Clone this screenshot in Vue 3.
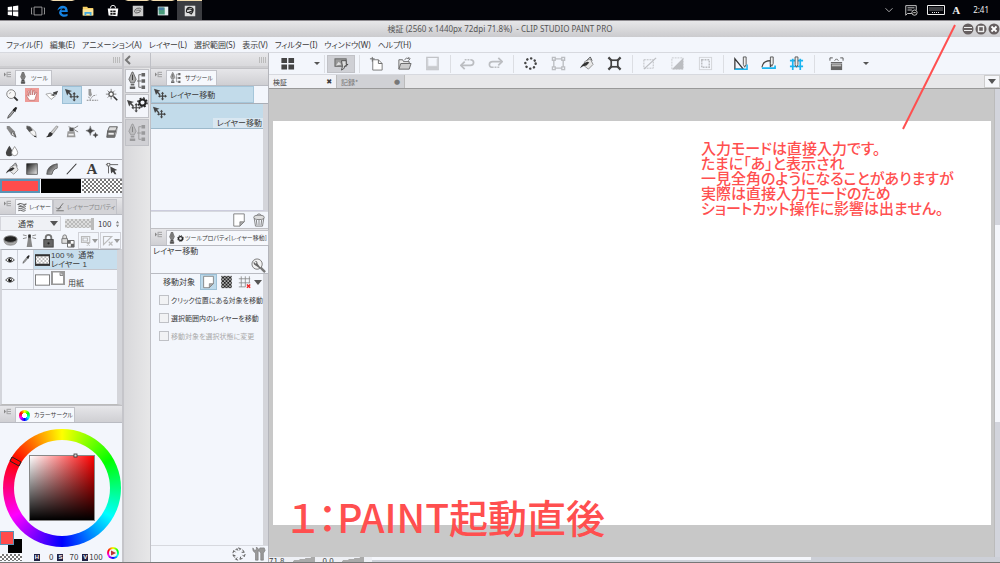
<script setup>
import { ref } from 'vue'

const menus = ['ファイル(F)', '編集(E)', 'アニメーション(A)', 'レイヤー(L)', '選択範囲(S)', '表示(V)', 'フィルター(I)', 'ウィンドウ(W)', 'ヘルプ(H)']
const toolGroups = [
  [['lens', '虫めがね'], ['hand', '移動', 'hand'], ['rotate', '操作'], ['move', 'レイヤー移動', 'on'], ['lasso', '選択範囲'], ['wand', '自動選択'], ['dropper', 'スポイト']],
  [['pen', 'ペン'], ['pencil', '鉛筆'], ['brush', '筆'], ['airbrush', 'エアブラシ'], ['sparkle', 'デコレーション'], ['eraser', '消しゴム'], ['drops', '色混ぜ']],
  [['bucket', '塗りつぶし'], ['gradient', 'グラデーション'], ['fan', '図形'], ['line', '直線'], ['letter', 'テキスト'], ['edit', '線修正']]
]
const commands = [
  [['photo', 'CLIP STUDIO', 'pressed']],
  [['newfile', '新規'], ['open', '開く'], ['save', '保存', 'dim']],
  [['undo', '取り消し', 'dim'], ['redo', 'やり直し', 'dim']],
  [['spin', '消去'], ['frame', '選択範囲外を消去', 'dim'], ['bucket', '塗りつぶし'], ['scale', '拡大・縮小']],
  [['deselect', '選択を解除', 'dim'], ['invert', '選択範囲を反転', 'dim'], ['border', '境界線', 'dim']],
  [['snap1', '定規にスナップ'], ['snap2', '特殊定規にスナップ'], ['snap3', 'グリッドにスナップ']],
  [['keyboard', 'キーボード']]
]
const options = ref([
  { label: 'クリック位置にある対象を移動', on: false, off: false },
  { label: '選択範囲内のレイヤーを移動', on: false, off: false },
  { label: '移動対象を選択状態に変更', on: false, off: true }
])
const opacity = ref(100)
const blend = ref('通常')
</script>

<template>
  <div class="app">
    <svg class="defs" aria-hidden="true">
      <defs>
        <linearGradient id="g-dark" x1="0" y1="0" x2="1" y2="1"><stop offset="0" stop-color="#111" /><stop offset="1" stop-color="#eee" /></linearGradient>
        <pattern id="p-check" width="4" height="4" patternUnits="userSpaceOnUse"><rect width="4" height="4" fill="#fff" /><path d="M0 0h2v2H0zM2 2h2v2H2z" fill="#bbb" /></pattern>
        <pattern id="p-dark" width="4" height="4" patternUnits="userSpaceOnUse"><rect width="4" height="4" fill="#aaa" /><path d="M0 0h2v2H0zM2 2h2v2H2z" fill="#222" /></pattern>
      </defs>
      <symbol id="lens" viewBox="0 0 16 16"><circle cx="7" cy="7" r="5" fill="#f8f8f8" stroke="#777" /><path d="M5 7a2 2 0 0 1 2-2" fill="none" stroke="#aaa" /><path d="M10.500 10.500l4 4" stroke="#333" stroke-width="2.200" /></symbol>
      <symbol id="hand" viewBox="0 0 16 16"><path d="M5 14L1.800 9q0-1.500 1.500-1L4.500 9.500 3.500 4q.5-1.500 1.500 0l1 4 .2-6q1-1.200 1.700 0L8.200 8l1.500-5q1.300-.8 1.500.5L10.500 8l2-3q1.300-.3 1 1l-1.800 6-.7 2z" fill="#fff" stroke="#b66565" stroke-width=".8" /></symbol>
      <symbol id="rotate" viewBox="0 0 16 16"><path d="M1 7l5-1 6 3-5 4z" fill="#fff" stroke="#888" stroke-width=".8" /><path d="M6 8l4-1-1-2 6-2-2 5-2-1-1 2z" fill="#444" /></symbol>
      <symbol id="move" viewBox="0 0 16 16"><path d="M0 1l8 2.500-3 1L8 8 6.500 9 4 6 2.500 8.500z" fill="#444" /><path d="M10.500 4.500l2 2.500h-1.300v2.300h2.300V8l2.500 2-2.500 2v-1.300h-2.300V13h1.300l-2 2.500-2-2.500h1.300v-2.300H7.500V12L5 10l2.500-2v1.300h2.300V7H8.500z" fill="#444" /></symbol>
      <symbol id="lasso" viewBox="0 0 16 16"><path d="M4 1h3v3l1 4-2 2-2-2z" fill="#999" /><path d="M2 14h13M4 10l2 3 3-4 4-1" fill="none" stroke="#777" stroke-dasharray="2 1" /></symbol>
      <symbol id="wand" viewBox="0 0 16 16"><path d="M7 1v12M1 7h12M3 3l8 8M11 3l-8 8" stroke="#777" /><circle cx="7" cy="7" r="2.500" fill="#fff" stroke="#555" stroke-width="1.400" /><path d="M10 10l4 4" stroke="#333" stroke-width="1.800" /></symbol>
      <symbol id="dropper" viewBox="0 0 16 16"><path d="M3 14l1-3 5-6 1.500 1.500-5 6z" fill="#aaa" stroke="#333" stroke-width=".8" /><path d="M9 4l3-3 2 1-2 4 0 1-3-2z" fill="#222" /></symbol>
      <symbol id="pen" viewBox="0 0 16 16"><path d="M2 1l3 0 6 6 2 7-6-3L2 4z" fill="#888" /><path d="M8 8l2 0 2.500 6L7 11z" fill="#eee" stroke="#444" stroke-width=".7" /><path d="M9 9l3 4" stroke="#444" /></symbol>
      <symbol id="pencil" viewBox="0 0 16 16"><path d="M2 1l4 1 6 6 1 6-5-3L2 4z" fill="#f4f4f4" stroke="#888" stroke-width=".8" /><path d="M2 1l4 1 3 4-4 2-3-4z" fill="#555" /><path d="M11.500 12l1.500 2-3-1z" fill="#111" /></symbol>
      <symbol id="brush" viewBox="0 0 16 16"><path d="M13 1l2 1-6 8-3-1z" fill="#ccc" stroke="#777" stroke-width=".7" /><path d="M6 8l3 2q-1 4-8 4 3-2 3-4 1-2 2-2z" fill="#333" /></symbol>
      <symbol id="airbrush" viewBox="0 0 16 16"><path d="M3 7h8l1 7H2z" fill="#999" /><path d="M4 10h6v2H4z" fill="#eee" /><path d="M5 3h5v4H5z" fill="#555" /><path d="M10 4l5-3M10 5l5 3M7 3l-3-1" stroke="#777" /></symbol>
      <symbol id="sparkle" viewBox="0 0 16 16"><path d="M6 1q.3 5 5 5.500Q6.300 7 6 12 5.700 7 1 6.500 5.700 6 6 1zM12 8.500q.2 2.500 3 3-2.800.5-3 3-.2-2.500-3-3 2.800-.5 3-3z" fill="#444" stroke="#444" stroke-width=".4" /></symbol>
      <symbol id="eraser" viewBox="0 0 16 16"><path d="M5 2h9l-2 5H3z" fill="#ddd" stroke="#555" /><path d="M3 7h9l-1 7H2z" fill="#777" stroke="#555" /><path d="M3.500 8.500h7v3h-7zM14 2l-1 7-2 5" fill="#eee" stroke="#666" stroke-width=".7" /></symbol>
      <symbol id="drops" viewBox="0 0 16 16"><path d="M5 3q4 6 4 8a4 4 0 0 1-8 0q0-2 4-8z" fill="#444" /><path d="M11 4q3.500 5 3.500 7a3.500 3.500 0 0 1-7 0q0-2 3.500-7z" fill="#fff" stroke="#777" stroke-width=".8" /></symbol>
      <symbol id="bucket" viewBox="0 0 16 16"><path d="M6 6l6-3 3 6-5 5-5-4z" fill="#e8e8e8" stroke="#777" stroke-width=".8" /><path d="M1 13q2-5 8-7l2 1-3 3q-4 0-7 3z" fill="#333" /><path d="M8 5l4-4 2 4" fill="none" stroke="#555" /></symbol>
      <symbol id="gradient" viewBox="0 0 16 16"><rect x="2" y="2" width="12" height="12" fill="url(#g-dark)" stroke="#333" stroke-width=".8" /></symbol>
      <symbol id="fan" viewBox="0 0 16 16"><path d="M2 14Q2 4 14 2v5q-5 1-6 7z" fill="url(#g-dark)" stroke="#444" stroke-width=".8" /></symbol>
      <symbol id="line" viewBox="0 0 16 16"><path d="M2 14L13 2" stroke="#333" stroke-width="1.200" /></symbol>
      <symbol id="edit" viewBox="0 0 16 16"><path d="M1 3h14M4 3v10" stroke="#555" fill="none" /><rect x="2.500" y="1.500" width="3" height="3" fill="#fff" stroke="#555" stroke-width=".8" /><path d="M6 5l8 4-3 1 2 4h-2l-2-3-2 2z" fill="#444" /></symbol>
      <symbol id="nib" viewBox="0 0 10 20"><path d="M4 0h2l3 8-2 4H3L1 8z" fill="#888" stroke="#444" stroke-width=".8" /><path d="M5 3v6M3 13h4v2H3zM2 16h6v3H2z" stroke="#444" fill="#555" stroke-width=".8" /></symbol>
      <symbol id="nibtree" viewBox="0 0 20 20"><path d="M4.500 0h1L9 8l-2 4H3L1 8z" fill="#aaa" stroke="#555" stroke-width=".8" /><path d="M5 3v6" stroke="#333" /><path d="M3 13h4v2H3zM2 16h6v3H2zM15 1h4v4h-4zM15 8h4v4h-4zM15 15h4v4h-4z" fill="#666" /><path d="M15 3h-3v14h3M10 10h5" fill="none" stroke="#666" /></symbol>
      <symbol id="gear" viewBox="0 0 16 16"><circle cx="8" cy="8" r="4.500" fill="none" stroke="#222" stroke-width="3" /><circle cx="8" cy="8" r="6.700" fill="none" stroke="#222" stroke-width="2" stroke-dasharray="2.700 2.560" /></symbol>
      <symbol id="menuico" viewBox="0 0 8 8"><path d="M0 2l2 2-2 2zM4 1.500h4M4 4h4M4 6.500h4M3.500 1v6" stroke="#888" fill="#888" stroke-width=".8" /></symbol>
      <symbol id="layers" viewBox="0 0 16 16"><path d="M1 4q4-3 7-1t7 0L12 6q-4 2-6 0T1 4zM2 8q3-2 6 0t6-1M2 11q3-2 6 0t6-1M2 14q3-2 6 0t6-1" fill="none" stroke="#555" stroke-width="1.400" /></symbol>
      <symbol id="check" viewBox="0 0 16 16"><path d="M2 9l3 3 8-10M2 14h12M5 10l2 1 3-3" fill="none" stroke="#777" stroke-width="1.600" /></symbol>
      <symbol id="page" viewBox="0 0 16 16"><path d="M2 1h12v9l-5 5H2z" fill="#fff" stroke="#777" /><path d="M14 10H9v5z" fill="#aaa" stroke="#777" stroke-width=".8" /></symbol>
      <symbol id="trash" viewBox="0 0 16 16"><ellipse cx="8" cy="5" rx="6" ry="2.500" fill="#ddd" stroke="#777" /><path d="M5 3q3-4 6 0M2.500 6l1.500 9h8l1.500-9M5 8l.7 6M8 8v6M11 8l-.7 6" fill="none" stroke="#777" /></symbol>
      <symbol id="wrenchlens" viewBox="0 0 16 16"><circle cx="6.500" cy="6.500" r="5.500" fill="#f2f2f2" stroke="#777" /><path d="M10 10l5 5" stroke="#777" stroke-width="2.500" /><path d="M4 3l2 2-1 1-2-2q-1 3 2 4l4 3 1-1-3-4q0-3-3-3z" fill="#666" /></symbol>
      <symbol id="gridx" viewBox="0 0 16 16"><path d="M4 1v13M9 1v13M14 1v8M1 4h14M1 9h14M1 14h8" stroke="#888" fill="none" /><path d="M11 11l4 4M15 11l-4 4" stroke="#e22" stroke-width="1.800" /></symbol>
      <symbol id="spin" viewBox="0 0 16 16"><circle cx="8" cy="8" r="5.500" fill="none" stroke="#444" stroke-width="2.600" stroke-linecap="round" stroke-dasharray=".2 4.120" /></symbol>
      <symbol id="busy" viewBox="0 0 16 16"><path d="M7 1l3 1-2 2M12 3l2 3-3 0M15 8l-1 3-2-2M12 13l-3 1 1-3M7 15l-3-1 2-2M3 12l-2-3 3 1M1 7l1-3 2 2M4 3l2-1v2" fill="none" stroke="#555" stroke-width="1.100" /></symbol>
      <symbol id="wrench" viewBox="0 0 16 16"><path d="M1 1l2 3 2-1V0q4 2 2 6v9H4V7Q0 5 1 1zM9 1h5l1 3-2 3v8h-3V7L8 4z" fill="#999" stroke="#777" stroke-width=".7" /></symbol>
      <symbol id="photo" viewBox="0 0 16 16"><rect x="1" y="3" width="12" height="8" fill="#999" stroke="#666" /><path d="M2 10l3-4 3 3" fill="#ddd" /><path d="M8 5h5v4h2l-4 2v2l-3 2 1-4z" fill="#ddd" stroke="#444" stroke-width=".9" /></symbol>
      <symbol id="newfile" viewBox="0 0 16 16"><path d="M4 4h6l4 4v7H4z" fill="#fff" stroke="#777" /><path d="M10 4v4h4M1 3h5M3.500 1v5" fill="none" stroke="#666" /></symbol>
      <symbol id="open" viewBox="0 0 16 16"><path d="M2 14V4h4l1 2h6v2" fill="#eee" stroke="#666" /><path d="M2 14l2-6h11l-2 6z" fill="#ccc" stroke="#666" /><path d="M8 4q2-3 5-1M12 1l2 2-2 2" fill="none" stroke="#666" /></symbol>
      <symbol id="save" viewBox="0 0 16 16"><path d="M2 1.500h12v13H2z" fill="none" stroke="#666" stroke-width="1.500" /><path d="M2 11h12v3H2zM3 3v8M13 3v8" fill="#777" stroke="#888" /></symbol>
      <symbol id="undo" viewBox="0 0 16 16"><path d="M5 4h6q3.500 0 3.500 3T11 10H2" fill="none" stroke="#555" stroke-width="1.800" stroke-dasharray="2 1 2 1 20" /><path d="M5 6l-4 4 4 4" fill="none" stroke="#555" stroke-width="1.800" /></symbol>
      <symbol id="redo" viewBox="0 0 16 16"><path d="M12 12H5Q1.500 12 1.500 9T5 6h9" fill="none" stroke="#555" stroke-width="1.800" stroke-dasharray="2 1 2 1 20" /><path d="M11 2l4 4-4 4" fill="none" stroke="#555" stroke-width="1.800" /></symbol>
      <symbol id="frame" viewBox="0 0 16 16"><path d="M1.500 1.500h3v3h-3zM11.500 1.500h3v3h-3zM1.500 11.500h3v3h-3zM11.500 11.500h3v3h-3zM5 3h6M5 13h6M3 5v6M13 5v6" fill="none" stroke="#555" stroke-width="1.400" /></symbol>
      <symbol id="scale" viewBox="0 0 16 16"><rect x="4.500" y="4.500" width="7" height="7" fill="none" stroke="#444" stroke-width="1.800" /><path d="M5 5L1.500 1.500M11 5l3.500-3.500M5 11l-3.500 3.500M11 11l3.500 3.500" fill="none" stroke="#444" stroke-width="2.400" /></symbol>
      <symbol id="deselect" viewBox="0 0 16 16"><rect x="2" y="4" width="10" height="9" fill="none" stroke="#555" stroke-dasharray="2 1" /><path d="M2 14L15 2" stroke="#555" stroke-width="1.300" /></symbol>
      <symbol id="invert" viewBox="0 0 16 16"><rect x="2" y="2" width="12" height="12" fill="none" stroke="#777" stroke-dasharray="2 1" /><path d="M14 2v12H2z" fill="#555" /></symbol>
      <symbol id="border" viewBox="0 0 16 16"><rect x="1.500" y="1.500" width="13" height="13" fill="none" stroke="#999" /><rect x="4" y="4" width="8" height="8" fill="none" stroke="#555" stroke-width="1.500" stroke-dasharray="2 1" /></symbol>
      <symbol id="snap1" viewBox="0 0 16 16"><path d="M2 3v11h9z" fill="none" stroke="#333" stroke-width="1.300" /><path d="M2 14h13V9" fill="none" stroke="#18b4f0" stroke-width="1.600" /><path d="M11 1h3v8l-1.500 3L11 9z" fill="#eee" stroke="#555" /></symbol>
      <symbol id="snap2" viewBox="0 0 16 16"><path d="M1 12Q2 5 10 5v7" fill="none" stroke="#444" stroke-width="1.300" /><path d="M1 13h14v-3" fill="none" stroke="#18b4f0" stroke-width="1.800" /><path d="M10 1h3v7l-1.500 3L10 8z" fill="#eee" stroke="#555" /></symbol>
      <symbol id="snap3" viewBox="0 0 16 16"><path d="M4 3v12M12 3v12M1 5h14M1 11h14" stroke="#18b4f0" stroke-width="1.800" /><path d="M6.500 1h3v8L8 12 6.500 9z" fill="#eee" stroke="#555" /></symbol>
      <symbol id="keyboard" viewBox="0 0 16 16"><path d="M2 8h12v7H2z" fill="#666" /><path d="M3 9h10v2H3z" fill="#bbb" /><path d="M1 5V2h3M12 2h3v3M6 5l2-2 2 2M2 7h12" fill="none" stroke="#555" /></symbol>
      <symbol id="eye" viewBox="0 0 16 12"><path d="M1 6q7-8 14 0-7 7-14 0z" fill="#eee" stroke="#333" stroke-width="1.300" /><circle cx="8" cy="6" r="3" fill="#111" /><circle cx="9" cy="5" r="1" fill="#fff" /></symbol>
      <symbol id="mask" viewBox="0 0 16 16"><path d="M1 7q0 6 7 6t7-6z" fill="#aaa" stroke="#777" stroke-width=".7" /><ellipse cx="8" cy="6.500" rx="7" ry="3.500" fill="#222" stroke="#888" /></symbol>
      <symbol id="beacon" viewBox="0 0 16 16"><path d="M6.500 5h3l1.500 10H5z" fill="#888" /><path d="M7 2h2v3H7z" fill="#222" stroke="#444" /><path d="M1 2l4 1M15 2l-4 1M1 6l4-1M15 6l-4-1" stroke="#888" /></symbol>
      <symbol id="lock" viewBox="0 0 16 16"><path d="M5 8V5q0-3 3-3t3 3v3" fill="none" stroke="#777" stroke-width="2" /><rect x="3" y="7" width="10" height="8" fill="#666" stroke="#444" /><circle cx="8" cy="11" r="1.200" fill="#222" /></symbol>
      <symbol id="locktr" viewBox="0 0 16 16"><path d="M3 6V4q0-2 2-2t2 2v2M2 6h6v5H2z" fill="#ddd" stroke="#777" /><path d="M8 8h7v7H8z" fill="#fff" stroke="#666" /><path d="M8 8h3.500v3.500H8zM11.500 11.500H15V15h-3.500z" fill="#666" /></symbol>
      <symbol id="maskx" viewBox="0 0 16 16"><path d="M2 2h11v8H2zM4 4h6v4H4zM9 10l4 4M13 10l-4 4" fill="none" stroke="#bbb" stroke-width="1.500" /></symbol>
      <symbol id="rulerx" viewBox="0 0 16 16"><path d="M2 2h11L2 13zM9 9l5 5M14 9l-5 5" fill="none" stroke="#bbb" stroke-width="1.500" /></symbol>
    </svg>

    <header class="taskbar">
      <button class="task" aria-label="スタート"><svg viewBox="0 0 16 16"><path d="M2 3.500l5-.7v4.700H2zM8 2.600l6-.8v5.700H8zM2 8.500h5v4.700l-5-.7zM8 8.500h6v5.700l-6-.8z" fill="#fff" /></svg></button>
      <button class="task" aria-label="タスクビュー"><svg viewBox="0 0 16 16"><path d="M3.500 3.500h9v9h-9zM1.500 4.500h-1v7h1M14.500 4.500h1v7h-1" fill="none" stroke="#aaa" /></svg></button>
      <button class="task run" aria-label="Edge"><svg viewBox="0 0 16 16"><path d="M1.500 7.500Q3 2 8 2q5.500 0 5.500 7H6.200q.3 3 4 3 2 0 3-.8v2.500Q11 15 8 14.500 3.500 13.500 3.500 9.500 4 6 7 5 3.500 5 1.500 7.500zM6.200 7h4.300Q10.500 4.800 8.500 4.800T6.200 7z" fill="#1683e2" /></svg></button>
      <button class="task" aria-label="エクスプローラー"><svg viewBox="0 0 16 16"><path d="M2 3h5l1 1.500h6V13H2z" fill="#f5cf65" /><path d="M2 6h12v7H2z" fill="#fbe59c" /><path d="M4 9h8v4h-2v-2H6v2H4z" fill="#43a8df" /></svg></button>
      <button class="task" aria-label="ストア"><svg viewBox="0 0 16 16"><path d="M2 5h12l-1 9-10-1z" fill="#fff" /><path d="M5 5q0-3.500 3-3.500T11 5" fill="none" stroke="#fff" /><path d="M5 7.500h2.500V9.500H5zM8.200 7.500H11V9.500H8.200zM5 10.200h2.500v2H5zM8.200 10.200H11v2H8.200z" fill="#111" /></svg></button>
      <button class="task run" aria-label="CLIP STUDIO"><svg viewBox="0 0 16 16"><rect x="2" y="2" width="12" height="12" fill="#ccc" /><path d="M12 6q-2-2-5-1T4 9q1 2 4 1t3-2-2-1-3 1" fill="none" stroke="#555" /></svg></button>
      <button class="task run" aria-label="画像"><svg viewBox="0 0 16 16"><rect x="2" y="3" width="12" height="10" fill="#e5edf0" /><path d="M3 4h7v8H3z" fill="#4a9c7c" /><path d="M3 4h6v3H3z" fill="#467aa0" /></svg></button>
      <button class="task run active" aria-label="CLIP STUDIO PAINT"><svg viewBox="0 0 16 16"><rect x="2" y="2" width="12" height="12" fill="#ddd" /><path d="M9 12l2-3q2-4-2-5T4 7t4 2 1-3-3 1M7 10l3 1" fill="none" stroke="#222" stroke-width="1.300" /></svg></button>
      <div class="tray">
        <svg viewBox="0 0 16 16"><path d="M4 6l4 4 4-4" fill="none" stroke="#bbb" /></svg>
        <svg viewBox="0 0 16 16"><path d="M9 12H4l-2 2V3h12v5M4 5.500h8M4 8h5" fill="none" stroke="#ddd" /><circle cx="12" cy="11" r="3" fill="#000" stroke="#ddd" /><path d="M10.500 11h3" stroke="#ddd" /></svg>
        <svg class="kbd" viewBox="0 0 20 16"><path d="M1.500 3.500h17v9h-17z" fill="none" stroke="#eee" /><path d="M3.500 6h13M3.500 8h13M6 10.500h8" stroke="#eee" stroke-dasharray="1 1" /></svg>
        <b class="ime">A</b>
        <time>2:41</time>
      </div>
    </header>

    <div class="titlebar">
      <h1>検証 (2560 x 1440px 72dpi 71.8%)&nbsp; - CLIP STUDIO PAINT PRO</h1>
      <div class="win">
        <button aria-label="最小化"><svg viewBox="0 0 12 12"><circle cx="6" cy="6" r="5.500" fill="#665f60" /><path d="M2 4.500h8M2 7.500h8" stroke="#eee" stroke-width="1.200" /></svg></button>
        <button aria-label="最大化"><svg viewBox="0 0 12 12"><circle cx="6" cy="6" r="5.500" fill="#665f60" /><rect x="3.500" y="3.500" width="5" height="5" fill="#665f60" stroke="#eee" stroke-width="1.400" /></svg></button>
        <button aria-label="閉じる"><svg viewBox="0 0 12 12"><circle cx="6" cy="6" r="5.500" fill="#665f60" /><path d="M3.500 3.500l5 5M8.500 3.500l-5 5" stroke="#fff" stroke-width="1.800" /></svg></button>
      </div>
    </div>

    <nav class="menubar"><button v-for="m in menus" :key="m">{{ m }}</button></nav>

    <div class="body">
      <aside class="col tools">
        <div class="dock"><i class="grip"></i></div>
        <div class="tabs">
          <svg class="mi"><use href="#menuico" /></svg>
          <button class="tab"><svg class="nib"><use href="#nib" /></svg>ツール</button>
        </div>
        <div v-for="(g, n) in toolGroups" :key="n" class="group">
          <button v-for="t in g" :key="t[0]" class="tool" :class="t[2]" :aria-label="t[1]">
            <span v-if="t[0] === 'letter'" class="letter">A</span>
            <svg v-else><use :href="'#' + t[0]" /></svg>
          </button>
        </div>
        <div class="swatches">
          <button class="sw red" aria-label="メインカラー"></button>
          <button class="sw black" aria-label="サブカラー"></button>
          <button class="sw clear" aria-label="透明色"></button>
        </div>
        <div class="tabs">
          <svg class="mi"><use href="#menuico" /></svg>
          <button class="tab snug"><svg><use href="#layers" /></svg>レイヤー</button>
          <button class="tab snug idle"><svg><use href="#check" /></svg>レイヤープロパティ</button>
        </div>
        <div class="blend">
          <span class="pick"><select v-model="blend" aria-label="合成モード"><option>通常</option></select><i class="arrow dark"></i></span>
          <input v-model="opacity" type="range" min="0" max="100" aria-label="不透明度" />
          <output>{{ opacity }}</output>
          <svg class="updown" viewBox="0 0 6 10"><path d="M1 4l2-3 2 3zM1 6l2 3 2-3z" fill="#888" /></svg>
        </div>
        <div class="layer-tools">
          <button v-for="i in ['mask', 'beacon', 'lock', 'locktr']" :key="i" :aria-label="i"><svg><use :href="'#' + i" /></svg></button>
          <button v-for="i in ['maskx', 'rulerx']" :key="i" class="boxed" :aria-label="i"><svg><use :href="'#' + i" /></svg><i class="arrow"></i></button>
        </div>
        <div class="layer-list">
          <div class="layer selected">
            <span class="cell"><svg class="eye"><use href="#eye" /></svg></span>
            <span class="cell"><svg class="mini"><use href="#dropper" /></svg></span>
            <svg class="thumb" viewBox="0 0 16 12"><rect x=".5" y=".5" width="15" height="11" fill="url(#p-check)" stroke="#333" /><path d="M0 1h16M0 11h16" stroke="#333" stroke-width="2" /></svg>
            <div class="lname"><p>100 %&nbsp; 通常</p><p>レイヤー 1</p></div>
          </div>
          <div class="layer">
            <span class="cell"><svg class="eye"><use href="#eye" /></svg></span>
            <span class="cell"></span>
            <svg class="thumb" viewBox="0 0 16 12"><rect x=".5" y=".5" width="15" height="11" fill="#fff" stroke="#777" /></svg>
            <svg class="paper" viewBox="0 0 14 14"><rect width="14" height="14" fill="#999" /><path d="M2 1.500h7l3 3v8H2z" fill="#fff" /><path d="M9 1.500v3h3" fill="#ccc" stroke="#666" stroke-width=".7" /></svg>
            <p class="low">用紙</p>
          </div>
        </div>
        <div class="tabs">
          <svg class="mi"><use href="#menuico" /></svg>
          <button class="tab snug"><i class="wheel-ico"></i>カラーサークル</button>
        </div>
        <div class="color">
          <div class="wheel">
            <div class="hole"><div class="sv"></div></div>
            <svg class="marks" viewBox="0 0 118 118"><path d="M9 28l9 5M7 32l9 5M9 28l-2 4M18 33l-2 4" stroke="#222" fill="none" /><rect x="71" y="25" width="3" height="3" fill="#ddd" stroke="#333" stroke-width=".8" /></svg>
          </div>
          <div class="hsv">
            <div class="chips"><i class="sub"></i><i class="main"></i><i class="trans"></i></div>
            <span><b>H</b>0</span><span><b>S</b>70</span><span><b>V</b>100</span>
            <button class="switch" aria-label="表示切り替え"><svg viewBox="0 0 8 8"><circle cx="4" cy="4" r="4" fill="#f4f4f4" /><path d="M2 1.500l5 2.500-5 2.500z" fill="#b33" /></svg></button>
          </div>
        </div>
      </aside>

      <aside class="strip">
        <div class="dock"><svg viewBox="0 0 8 10"><path d="M6 1L2 5l4 4" fill="none" stroke="#777" stroke-width="2" /></svg></div>
        <button aria-label="サブツール"><svg><use href="#nibtree" /></svg></button>
        <button aria-label="ツールプロパティ"><svg><use href="#move" /></svg><svg class="cog"><use href="#gear" /></svg></button>
        <button class="off" aria-label="ブラシサイズ"><svg><use href="#nibtree" /></svg></button>
      </aside>

      <aside class="col second">
        <div class="dock"><i class="grip"></i></div>
        <div class="tabs">
          <svg class="mi"><use href="#menuico" /></svg>
          <button class="tab"><svg><use href="#nibtree" /></svg>サブツール</button>
        </div>
        <div class="subgroup"><button><svg><use href="#move" /></svg>レイヤー移動</button></div>
        <div class="sublist"><button><svg><use href="#move" /></svg><span>レイヤー移動</span></button></div>
        <div class="foot"><button aria-label="サブツールの複製"><svg><use href="#page" /></svg></button><button aria-label="削除"><svg><use href="#trash" /></svg></button></div>
        <div class="tabs">
          <svg class="mi"><use href="#menuico" /></svg>
          <button class="tab wide"><svg class="nib"><use href="#nib" /></svg><svg class="tiny"><use href="#gear" /></svg>ツールプロパティ[レイヤー移動]</button>
        </div>
        <div class="propname"><span>レイヤー移動</span><button aria-label="詳細"><svg><use href="#wrenchlens" /></svg></button></div>
        <div class="props">
          <div class="target">
            <span>移動対象</span>
            <button class="on" aria-label="レイヤー"><svg><use href="#page" /></svg></button>
            <button aria-label="トーン"><svg viewBox="0 0 14 16"><rect x="1" y="1" width="12" height="14" fill="url(#p-dark)" /></svg></button>
            <button aria-label="定規・グリッド"><svg><use href="#gridx" /></svg></button>
            <i class="arrow dark"></i>
          </div>
          <label v-for="o in options" :key="o.label" :class="{ disabled: o.off }"><input v-model="o.on" type="checkbox" :disabled="o.off" />{{ o.label }}</label>
        </div>
        <div class="foot"><button aria-label="初期設定に戻す"><svg><use href="#busy" /></svg></button><button aria-label="設定"><svg><use href="#wrench" /></svg></button></div>
      </aside>

      <main class="work">
        <div class="cmd">
          <button class="four" aria-label="表示"><svg viewBox="0 0 16 16"><path d="M1.500 2h6v5.500h-6zM9 2h6v5.500H9zM1.500 9h6v5.500h-6zM9 9h6v5.500H9z" fill="#444" /></svg></button>
          <i class="arrow dark small"></i>
          <div v-for="(g, n) in commands" :key="n" class="set">
            <button v-for="c in g" :key="c[0]" :class="c[2]" :aria-label="c[1]"><svg><use :href="'#' + c[0]" /></svg></button>
          </div>
          <i class="arrow dark small"></i>
        </div>
        <div class="docs">
          <button class="doc">検証<span>✖</span></button>
          <button class="doc other">記録*<span>●</span></button>
          <button class="list" aria-label="一覧"><i class="arrow dark"></i></button>
        </div>
        <div class="stage">
          <div class="view"><div class="sheet"></div></div>
          <div class="vbar"><i></i></div>
        </div>
        <div class="status"><span>71.8</span><i class="wedge"></i><span>0.0</span><i class="wedge"></i><div class="hbar"><i></i></div></div>
      </main>
    </div>

    <p class="caption">１：PAINT起動直後</p>
    <svg class="pointer" viewBox="0 0 56 108"><path d="M54 2L2 106" stroke="#ff4f4f" stroke-width="2" /></svg>
    <div class="note">
      <p>入力モードは直接入力です。</p>
      <p>たまに「あ」と表示され</p>
      <p>一見全角のようになることがありますが</p>
      <p>実際は直接入力モードのため</p>
      <p>ショートカット操作に影響は出ません。</p>
    </div>
  </div>
</template>

<style>
body { overflow: hidden; }
</style>

<style scoped>
.app { position: relative; display: flex; flex-direction: column; height: 100vh; overflow: hidden; background: #f3f6fc; color: #3c3c3c; font: 8px/10px "Noto Sans CJK JP", "Noto Sans", sans-serif; font-feature-settings: "palt"; }
.app * { box-sizing: border-box; }
.defs { position: absolute; width: 0; height: 0; }
button { appearance: none; border: 0; padding: 0; margin: 0; background: none; font: inherit; color: inherit; font-feature-settings: inherit; white-space: nowrap; display: flex; align-items: center; justify-content: center; }
p, h1 { margin: 0; }
svg { display: block; flex: none; }
.taskbar { display: flex; height: 20px; background: #020308; flex: none; }
.task { width: 25px; border-top: 1px solid transparent; }
.task svg { width: 14px; height: 16px; }
.run { border-top-color: #f4deb0; border-left: 3px solid #020308; border-right: 3px solid #020308; }
.active { background: #3b3c40; border-left: 0; border-right: 0; margin-left: 2px; }
.tray { margin-left: auto; display: flex; align-items: center; gap: 8px; color: #eee; padding-right: 11px; }
.tray svg { width: 14px; height: 14px; }
.tray .kbd { width: 20px; height: 16px; }
.ime { font: bold 11px/16px "Liberation Serif", serif; margin-left: -2px; }
time { margin-left: 5px; font: 8px/12px "Noto Sans", sans-serif; }
.titlebar { height: 17px; flex: none; position: relative; border-top: 1px solid #8e8b90; background: linear-gradient(#e7e7e9, #cbcbce); display: flex; align-items: center; justify-content: center; }
h1 { font: 8px/14px "Noto Sans", "Noto Sans CJK JP", sans-serif; color: #555; }
.win { position: absolute; right: 0; display: flex; gap: 1px; }
.win svg { width: 12px; height: 12px; }
.menubar { height: 16px; flex: none; display: flex; gap: 7px; padding-left: 6px; border-bottom: 1px solid #d7d9df; font-family: "Noto Sans", "Noto Sans CJK JP", sans-serif; }
.body { flex: 1; min-height: 0; display: grid; grid-template-columns: 124px 27px 118px 1fr; border-bottom: 1px solid #777; }
.col, .work { display: flex; flex-direction: column; min-width: 0; min-height: 0; }
.dock { height: 15px; flex: none; background: linear-gradient(#e8e8eb, #d9d9dc); border-bottom: 2px solid #cdcdd0; display: flex; align-items: center; justify-content: flex-end; padding-right: 1px; }
.grip { width: 8px; height: 6px; background: repeating-linear-gradient(90deg, #bbb 0 1px, transparent 1px 2px); }
.tools { border-right: 2px solid #c5c5ca; }
.tabs { height: 18px; flex: none; display: flex; align-items: flex-end; background: linear-gradient(#e6e6e9, #cfcfd3); border-top: 1px solid #c0c0c4; border-bottom: 1px solid #b9bbc2; }
.mi { width: 7px; height: 7px; margin: 0 4px 7px; }
.tab { height: 15px; padding: 0 3px; gap: 4px; background: #f6f8fc; border: 1px solid #c2c3c9; border-bottom: 0; font-size: 6px; }
.tab svg { width: 11px; height: 12px; }
.tab .nib { width: 8px; }
.tab .tiny { width: 7px; height: 7px; }
.snug { gap: 2px; padding: 0 1px; }
.snug svg { width: 10px; height: 10px; }
.idle { background: #d3d3d7; color: #888; }
.wide { gap: 1px; padding: 0 1px; }
.group { display: grid; grid-template-columns: repeat(6, 20px); grid-auto-rows: 18px; border-bottom: 1px solid #b5b6bd; padding: 0 2px; }
.tool svg { width: 14px; height: 14px; }
.tool.hand { background: #ee9c98; margin: 2px 3px; }
.tool.on, .target .on { background: #bdd9ea; border: 1px solid #9cc0d6; }
.letter { font: bold 15px/16px "Liberation Serif", serif; }
.swatches { display: grid; grid-template-columns: repeat(3, 1fr); gap: 1px; height: 14px; flex: none; margin-bottom: 4px; }
.sw.red { background: #ff4c4c; border: 2px solid #5a93b5; }
.sw.black { background: #000; }
.clear, .trans { background: repeating-conic-gradient(#777 0 25%, #fff 0 50%) 0 0 / 4px 4px; }
.blend { display: flex; align-items: center; height: 17px; flex: none; gap: 4px; }
.pick { display: flex; align-items: center; width: 61px; height: 15px; padding-right: 2px; border: 1px solid #d5d6dc; background: #eff1f5; }
select { appearance: none; flex: 1; min-width: 0; height: 13px; padding: 0 0 0 17px; border: 0; color: inherit; background: none; border-radius: 0; font: 8px/12px "Noto Sans CJK JP", sans-serif; }
input[type="range"] { appearance: none; width: 29px; height: 9px; margin: 0; background: repeating-conic-gradient(#bbb 0 25%, #ddd 0 50%) 0 0 / 4px 4px; }
input[type="range"]::-webkit-slider-thumb { appearance: none; width: 3px; height: 12px; background: #bbb; }
output { font-size: 8px; }
.updown { width: 5px; height: 8px; }
.layer-tools { display: flex; height: 17px; flex: none; padding-left: 1px; }
.layer-tools button { width: 19px; }
.layer-tools svg { width: 15px; height: 15px; }
.layer-tools .boxed { width: 21px; margin-left: 1px; border: 1px solid #d0d1d7; }
.boxed svg { width: 12px; height: 12px; }
.arrow { border: 3px solid transparent; border-top: 4px solid #999; border-bottom: 0; flex: none; }
.arrow.dark { border-width: 5px 4px 0; border-top-color: #555; }
.arrow.small { border-width: 3px 3px 0; }
.layer-list { flex: 1; min-height: 0; border-left: 2px solid #d3d5db; border-right: 5px solid #d4d5da; border-top: 1px solid #a9adb5; border-bottom: 1px solid #bbb; }
.layer { display: flex; align-items: center; height: 20px; border-bottom: 1px solid #c5c7ce; line-height: 9px; }
.layer p { white-space: nowrap; font-family: "Liberation Sans", "Noto Sans CJK JP", sans-serif; }
.lname { margin-left: 1px; }
.layer .low { margin-top: 8px; margin-left: 3px; }
.selected { background: #c7deed; }
.cell { width: 16px; height: 19px; border-right: 1px solid #cdd0d8; display: flex; align-items: center; justify-content: center; flex: none; background: #f3f6fc; }
.eye { width: 10px; height: 8px; }
.mini { width: 10px; height: 11px; }
.thumb { width: 15px; height: 12px; margin-left: 1px; }
.paper { width: 14px; height: 14px; margin-left: 1px; margin-bottom: 3px; }
.wheel-ico, .switch { width: 11px; height: 11px; border-radius: 50%; background: radial-gradient(#fff 0 29%, transparent 32%), conic-gradient(yellow, lime, cyan, blue, magenta, red, yellow); }
.wheel-ico { margin: 0 2px; }
.color { height: 139px; flex: none; padding-top: 6px; position: relative; }
.wheel { width: 118px; height: 118px; margin-left: 3px; border-radius: 50%; background: conic-gradient(yellow, lime, cyan, blue, magenta, red, yellow); display: grid; place-items: center; position: relative; }
.hole { width: 96px; height: 96px; border-radius: 50%; background: #f3f6fc; display: grid; place-items: center; }
.sv { width: 66px; height: 66px; background: linear-gradient(transparent, #000), linear-gradient(90deg, #fff, #f00); border: 1px solid #888; }
.marks { position: absolute; inset: 0; }
.hsv { position: absolute; left: 0; right: 0; bottom: 0; height: 31px; display: flex; align-items: flex-end; gap: 4px; padding-right: 3px; }
.hsv span { display: flex; gap: 1px; align-items: center; }
.hsv span:nth-of-type(1) { gap: 9px; margin-left: 8px; }
.hsv span:nth-of-type(2) { gap: 6px; }
.hsv b { width: 6px; height: 7px; background: #224; color: #fff; font: bold 6px/7px "Liberation Sans", sans-serif; text-align: center; }
.chips { width: 22px; height: 31px; position: relative; flex: none; }
.chips i { position: absolute; }
.main { left: 0; top: 0; width: 14px; height: 14px; background: #ff4c4c; border: 1px solid #5a93b5; }
.sub { left: 8px; top: 8px; width: 14px; height: 14px; background: #000; }
.chips .trans { left: 0; bottom: 1px; width: 22px; height: 7px; }
.switch { margin: 0 0 3px auto; width: 12px; height: 12px; }
.switch svg { width: 8px; height: 8px; }
.strip { background: linear-gradient(90deg, #d8d8db, #e7e7e8); border-right: 1px solid #bfc0c6; display: flex; flex-direction: column; gap: 1px; }
.strip .dock { justify-content: flex-start; }
.strip .dock svg { width: 8px; height: 10px; }
.strip button { height: 24px; margin: 0 1px; background: #f3f5fa; border: 1px solid #c0c1c6; }
.strip button svg { width: 18px; height: 20px; }
.strip button .cog { width: 11px; height: 11px; margin: 0 0 8px -4px; }
.strip button:nth-of-type(2) svg:first-child { width: 14px; }
.strip .off { background: #d0d0d4; height: 27px; }
.off svg { opacity: .5; }
.second { border-right: 1px solid #b4b5bb; }
.subgroup { border-bottom: 1px solid #aaaeb6; height: 18px; flex: none; }
.subgroup button { width: 103px; height: 17px; justify-content: flex-start; gap: 3px; padding-left: 2px; background: #c2dbea; border: 1px solid #a5c6da; }
.subgroup svg, .sublist svg { width: 13px; height: 13px; }
.sublist { flex: none; height: 107px; border-right: 5px solid #d4d5da; border-bottom: 1px solid #ccd; }
.sublist button { width: 100%; height: 25px; align-items: flex-start; justify-content: space-between; padding: 2px 0 0 2px; background: #c2dbea; border-bottom: 1px solid #9cb9cb; }
.sublist span { align-self: flex-end; background: #d9e7f1; padding: 0 1px 0 4px; }
.foot { display: flex; justify-content: flex-end; gap: 6px; height: 17px; padding-right: 2px; flex: none; border-top: 1px solid #d7d9df; }
.foot svg { width: 14px; height: 14px; }
.propname { height: 28px; flex: none; display: flex; justify-content: space-between; padding: 0 2px; border-bottom: 1px solid #b9bbc2; }
.propname button { align-self: flex-end; }
.propname svg { width: 15px; height: 15px; }
.props { flex: 1; min-height: 0; border-right: 5px solid #d4d5da; }
.target { height: 16px; display: flex; align-items: center; gap: 1px; padding-left: 12px; margin-bottom: 1px; }
.target span { margin-right: 4px; }
.target button { width: 17px; height: 16px; }
.target svg { width: 13px; height: 14px; }
label { display: flex; align-items: center; height: 18px; padding-left: 8px; gap: 2px; white-space: nowrap; font-size: 7px; }
.disabled { color: #aaa; }
input[type="checkbox"] { appearance: none; width: 10px; height: 10px; margin: 0; background: #f1f2f4; border: 1px solid #bfc1c6; flex: none; }
.cmd { height: 22px; flex: none; display: flex; align-items: center; padding-left: 9px; border-bottom: 1px solid #d7d9df; }
.cmd svg { width: 15px; height: 15px; }
.four { width: 18px; margin-right: 18px; }
.set { display: flex; margin-left: 4px; padding-left: 2px; border-left: 1px solid #dcdee3; }
.set button { width: 28px; height: 18px; }
.set:last-of-type { padding-left: 7px; }
.pressed { background: #cfd0d5; border: 1px solid #c1c2c7; }
.dim { opacity: .35; }
.cmd > .small:last-child { margin-left: 13px; }
.docs { height: 14px; flex: none; display: flex; background: #e7e7e9; border-bottom: 1px solid #999; font-size: 7px; }
.doc { width: 68px; justify-content: space-between; padding: 0 4px; background: #f1f2f6; border-right: 1px solid #bbb; }
.doc.other { background: #d0d1d5; color: #777; }
.doc span { font: 7px/8px "DejaVu Sans", sans-serif; }
.list { margin-left: auto; width: 16px; background: #f6f7fa; border: 1px solid #ccc; }
.stage { flex: 1; min-height: 0; display: flex; }
.view { flex: 1; background: #c8c8c8; padding: 32px 3px 32px 4px; display: flex; }
.sheet { flex: 1; background: #fff; }
.vbar { width: 6px; background: #d2d4dc; border-left: 1px solid #bbb; padding-top: 136px; }
.vbar i { display: block; height: 197px; background: #f5f7fc; }
.status { height: 5px; flex: none; overflow: hidden; display: flex; gap: 8px; background: #eef0f5; font-size: 8px; line-height: 8px; }
.wedge { width: 22px; height: 5px; background: linear-gradient(170deg, transparent 40%, #aaa 42%); }
.hbar { flex: 1; background: #cdd0d8; }
.hbar i { display: block; width: 70%; height: 3px; background: #f5f7fc; }
.caption { position: absolute; left: 288px; bottom: 23px; color: #ff4f4f; font-size: 39px; line-height: 48px; font-weight: 500; white-space: nowrap; }
.pointer { position: absolute; top: 23px; right: 43px; width: 56px; height: 108px; }
.note { position: absolute; top: 141px; right: 43px; width: 256px; color: #ff4f4f; font: 500 15px/15px "Liberation Sans", "Noto Sans CJK JP", sans-serif; font-feature-settings: "palt"; white-space: nowrap; }
</style>
